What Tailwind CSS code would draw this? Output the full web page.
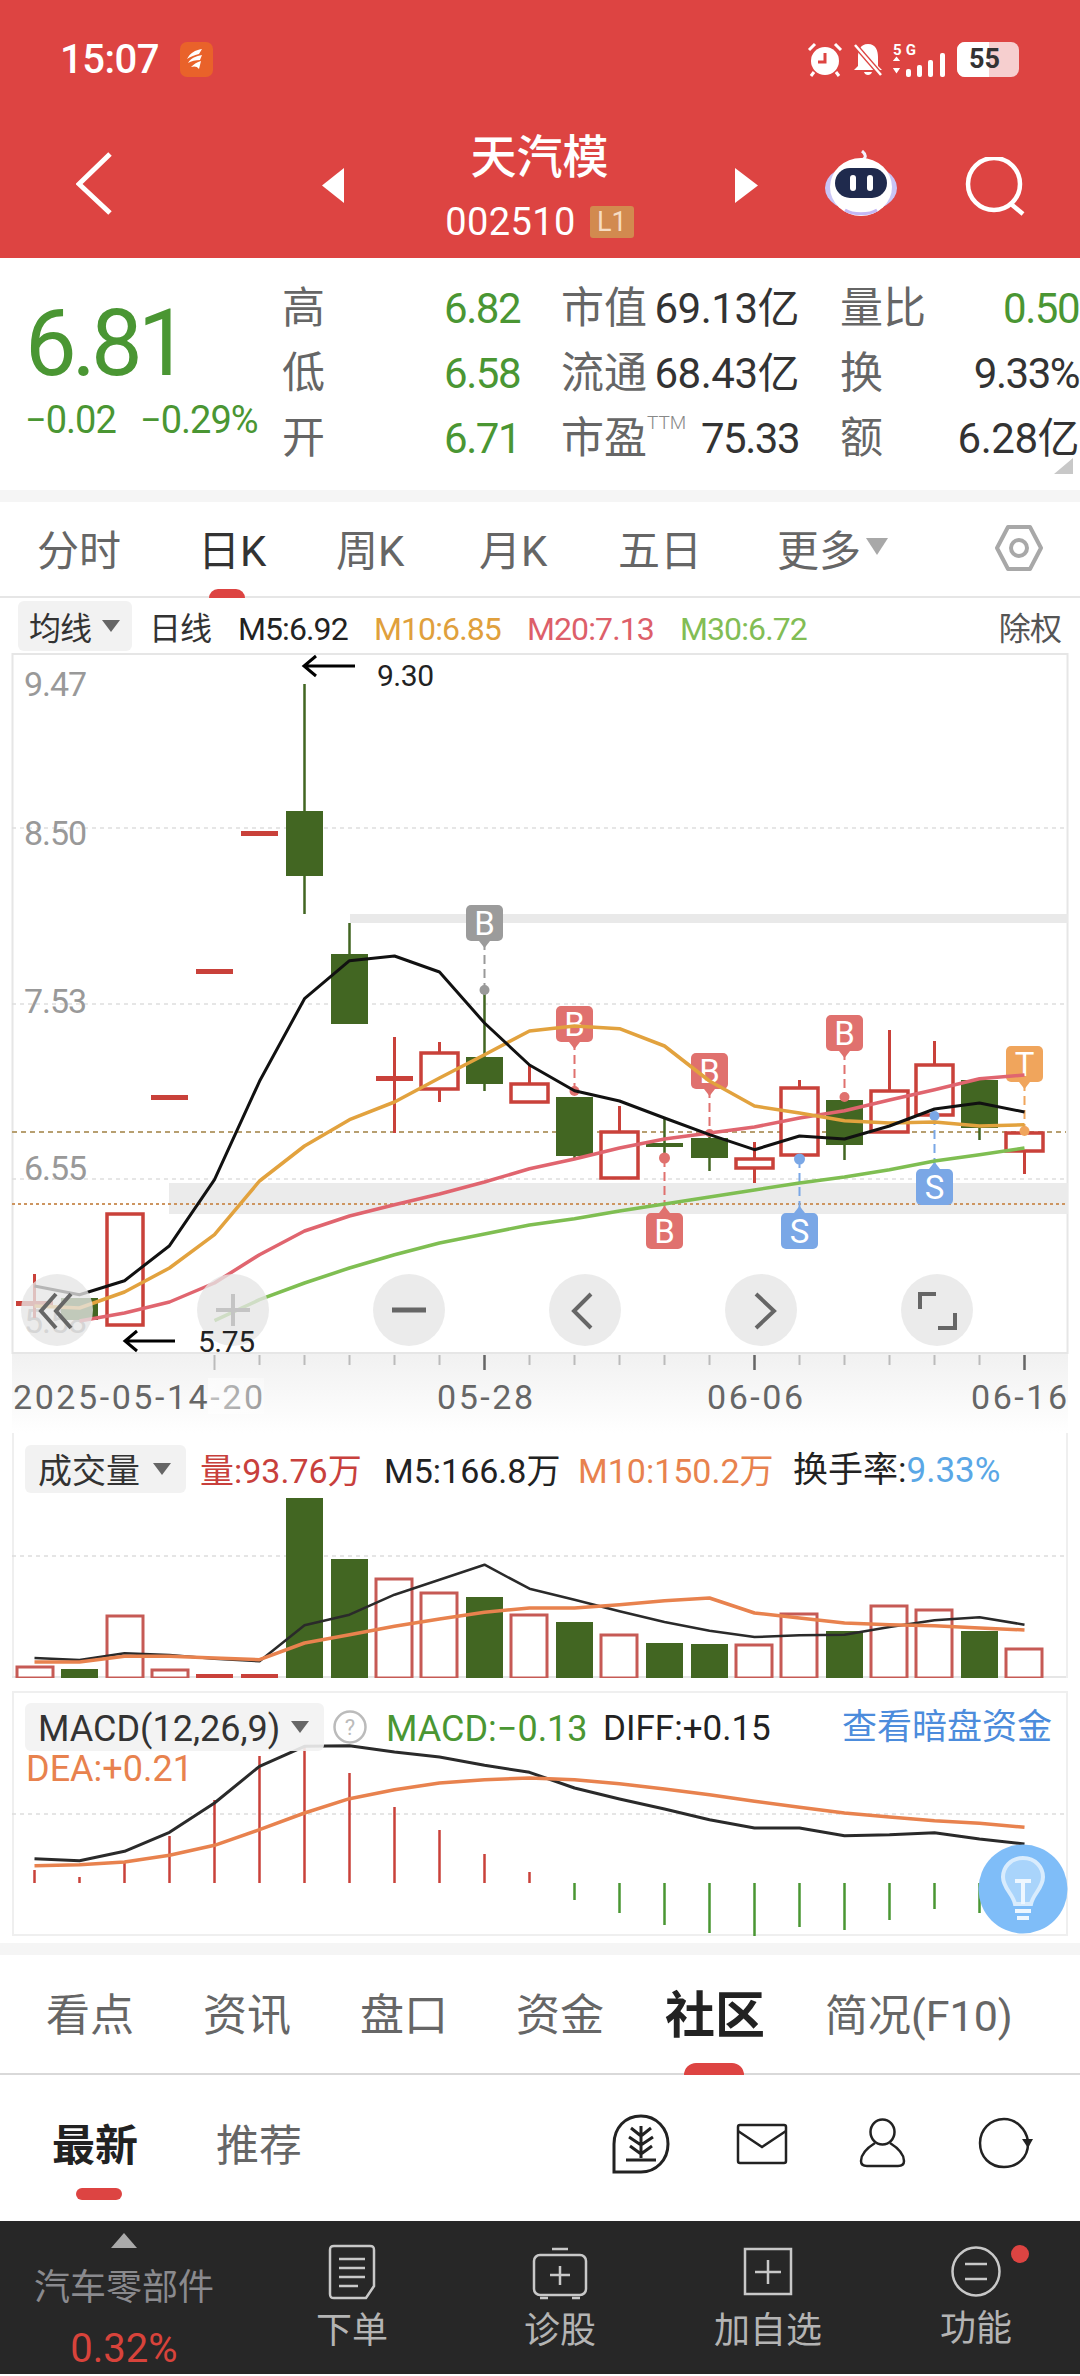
<!DOCTYPE html>
<html lang="zh-CN">
<head>
    <meta charset="UTF-8">
    <meta name="viewport" content="width=device-width, initial-scale=1.0">
    <title>天汽模</title>
    <script src="https://cdn.jsdelivr.net/npm/@tailwindcss/browser@4"></script>
</head>
<body class="bg-white">
<div class="w-[1080px] h-[2376px] overflow-hidden flex flex-col font-['Roboto','Noto_Sans_CJK_SC',sans-serif]">

    <!-- 顶栏 -->
    <header class="h-[258px] bg-[#dd4442] text-white shrink-0 pt-[42px]">
        <div class="h-[35px] flex items-center pl-[60px]">
            <span class="text-[40px] font-medium leading-[35px] w-[108px] tracking-[-0.5px]">15:07</span>
            <svg class="ml-[12px]" width="33" height="35" viewBox="0 0 33 35"><rect width="33" height="35" rx="7" fill="#e9622a"/><path d="M7 17C10 11 15 8 22 7L19 12C14 13 10 15 7 17ZM8 21C11 16 16 14 22 13L20 18C16 18 11 19 8 21ZM11 25C14 22 17 20 21 19L19 27C17 24 14 24 11 25Z" fill="#fff"/></svg>
            <div class="ml-auto flex items-center mr-[61px]">
                <svg width="36" height="35" viewBox="0 0 36 35"><circle cx="18" cy="19" r="14" fill="#fff"/><path d="M18 11V20H11" stroke="#dd4442" stroke-width="3" fill="none"/><path d="M2 8 8 2M34 8 28 2M7 30 4 34M29 30 32 34" stroke="#fff" stroke-width="3"/></svg>
                <svg class="ml-[9px]" width="32" height="35" viewBox="0 0 32 35"><path d="M16 2C8 2 6 9 6 15V24L2 28H30L26 24V15C26 9 24 2 16 2ZM12 30C13 34 19 34 20 30Z" fill="#fff"/><path d="M3 3 29 33" stroke="#dd4442" stroke-width="5"/><path d="M3 3 29 33" stroke="#fff" stroke-width="2.5"/></svg>
                <svg class="ml-[9px]" width="55" height="35" viewBox="0 0 55 35"><text x="0" y="13" font-size="15" font-weight="700" fill="#fff" textLength="23">5G</text><path d="M5 16 9 21H1ZM5 35 1 29H9Z" fill="#fff" transform="translate(-1 0) scale(.9)"/><rect x="13" y="27" width="5" height="8" rx="2" fill="#fff"/><rect x="24" y="23" width="5" height="12" rx="2" fill="#fff"/><rect x="35" y="18" width="5" height="17" rx="2" fill="#fff"/><rect x="47" y="11" width="5" height="24" rx="2" fill="#fff"/></svg>
                <div class="relative ml-[9px] w-[62px] h-[35px] rounded-[8px] bg-[#f6cfcf] overflow-hidden flex items-center">
                    <div class="absolute inset-y-0 left-0 w-[32px] bg-white"></div>
                    <span class="relative ml-[12px] text-[#333] text-[27px] font-bold leading-none">55</span>
                </div>
            </div>
        </div>
        <div class="h-[101px] mt-[60px] flex items-start pl-[76px]">
            <svg class="mt-[15px]" width="36" height="63" viewBox="0 0 36 63"><path d="M34 2 3 32 34 61" fill="none" stroke="#fff" stroke-width="5"/></svg>
            <svg class="mt-[31px] ml-[210px]" width="22" height="35" viewBox="0 0 22 35"><path d="M22 0V35L0 17.5Z" fill="#fff"/></svg>
            <div class="w-[391px] flex flex-col items-center">
                <div class="text-[46px] leading-[41px] font-medium">天汽模</div>
                <div class="mt-[28px] flex items-center h-[32px]">
                    <span class="text-[38px] leading-[32px] tracking-[0.4px]">002510</span>
                    <span class="ml-[14px] w-[44px] h-[32px] rounded-[3px] bg-[#d28a4f] text-[#f6dcc3] text-[27px] leading-[32px] text-center">L1</span>
                </div>
            </div>
            <svg class="mt-[31px]" width="23" height="35" viewBox="0 0 23 35"><path d="M0 0V35L23 17.5Z" fill="#fff"/></svg>
            <svg class="mt-[13px] ml-[67px]" width="72" height="66" viewBox="0 0 72 66">
                <path d="M36 10C41 9 42 5 37 1" stroke="#f3f1ff" stroke-width="3" fill="none"/>
                <ellipse cx="36" cy="38" rx="36" ry="24" fill="#c9c4f5"/>
                <ellipse cx="36" cy="37" rx="31" ry="29" fill="#fff"/>
                <rect x="10" y="18" width="52" height="30" rx="15" fill="#1f2a4d"/>
                <rect x="25" y="25" width="6" height="16" rx="3" fill="#fff"/>
                <rect x="42" y="25" width="6" height="16" rx="3" fill="#fff"/>
                <path d="M20 60C28 65 44 65 52 60" stroke="#c4b8f5" stroke-width="3" fill="none"/>
            </svg>
            <svg class="mt-[20px] ml-[68px]" width="62" height="60" viewBox="0 0 62 60"><ellipse cx="29" cy="27" rx="26" ry="26" fill="none" stroke="#fff" stroke-width="4.5"/><path d="M46 47 58 57" stroke="#fff" stroke-width="4.5"/></svg>
        </div>
    </header>

    <!-- 行情 -->
    <section class="relative h-[232px] shrink-0 flex pl-[25px]">
        <div class="w-[257px] flex flex-col text-[#4a9633]">
            <div class="text-[92px] leading-[92px] mt-[40px] tracking-[-5px]">6.81</div>
            <div class="flex text-[38px] leading-[40px] mt-[10px] tracking-[-1px]">
                <span class="w-[115px]">−0.02</span>
                <span>−0.29%</span>
            </div>
        </div>
        <div class="mt-[18px] grid grid-cols-[238px_238px_239px] auto-rows-[65px] gap-x-[41px] text-[43px] text-[#666] items-center whitespace-nowrap">
            <div class="flex justify-between items-center"><span>高</span><span class="text-[42px] text-[#4a9633] tracking-[-1.5px]">6.82</span></div>
            <div class="flex justify-between items-center"><span>市值</span><span class="text-[42px] text-[#333] tracking-[-0.5px]">69.13亿</span></div>
            <div class="flex justify-between items-center"><span>量比</span><span class="text-[42px] text-[#4a9633] tracking-[-1.5px]">0.50</span></div>
            <div class="flex justify-between items-center"><span>低</span><span class="text-[42px] text-[#4a9633] tracking-[-1.5px]">6.58</span></div>
            <div class="flex justify-between items-center"><span>流通</span><span class="text-[42px] text-[#333] tracking-[-0.5px]">68.43亿</span></div>
            <div class="flex justify-between items-center"><span>换</span><span class="text-[42px] text-[#333] tracking-[-1.5px]">9.33%</span></div>
            <div class="flex justify-between items-center"><span>开</span><span class="text-[42px] text-[#4a9633] tracking-[-1.5px]">6.71</span></div>
            <div class="flex justify-between items-center"><span class="flex items-start">市盈<span class="text-[19px] leading-[34px] text-[#888] font-light">TTM</span></span><span class="text-[42px] text-[#333] tracking-[-1.5px]">75.33</span></div>
            <div class="flex justify-between items-center"><span>额</span><span class="text-[42px] text-[#333] tracking-[-0.5px]">6.28亿</span></div>
        </div>
        <svg class="absolute right-[7px] bottom-[16px]" width="19" height="16" viewBox="0 0 19 16"><path d="M19 0V16H0Z" fill="#c8c8c8"/></svg>
    </section>
    <div class="h-[12px] bg-[#f5f5f5] shrink-0"></div>

    <!-- 周期 -->
    <nav class="relative h-[96px] shrink-0 border-b-2 border-[#e6e6e6] flex items-center pl-[37px] text-[42px] leading-[48px] text-[#666] pt-[6px] whitespace-nowrap">
        <span class="w-[81px]">分时</span>
        <span class="relative ml-[80px] w-[64px] text-[#333]">日K<span class="absolute left-[11px] top-[61px] w-[36px] h-[9px] rounded-t-full bg-[#dd4442]"></span></span>
        <span class="ml-[74px] w-[67px]">周K</span>
        <span class="ml-[76px] w-[65px]">月K</span>
        <span class="ml-[74px] w-[76px]">五日</span>
        <span class="ml-[83px] w-[80px]">更多</span>
        <svg class="ml-[9px] -mt-[12px]" width="22" height="17" viewBox="0 0 22 17"><path d="M0 0H22L11 17Z" fill="#a8a8a8"/></svg>
        <svg class="ml-[107px] -mt-[8px]" width="48" height="46" viewBox="0 0 48 46"><path d="M13 2H35L46 23 35 44H13L2 23Z" fill="none" stroke="#a8a8a8" stroke-width="4" stroke-linejoin="round"/><ellipse cx="24" cy="23" rx="8" ry="8" fill="none" stroke="#a8a8a8" stroke-width="4"/></svg>
    </nav>

    <!-- 均线 -->
    <div class="h-[55px] shrink-0 flex items-center pl-[18px] pr-[19px] text-[32px] tracking-[-0.9px] whitespace-nowrap">
        <div class="w-[114px] h-[50px] rounded-[6px] bg-[#f2f2f2] flex items-center pl-[11px] text-[#333]"><span class="w-[63px] pt-[6px]">均线</span><svg class="ml-[10px]" width="18" height="12" viewBox="0 0 18 12"><path d="M0 0H18L9 12Z" fill="#666"/></svg></div>
        <span class="ml-[17px] w-[61px] pt-[6px] text-[#333]">日线</span>
        <span class="ml-[28px] w-[110px] pt-[6px] text-[#222]">M5:6.92</span>
        <span class="ml-[26px] w-[127px] pt-[6px] text-[#e0a03c]">M10:6.85</span>
        <span class="ml-[26px] w-[127px] pt-[6px] text-[#dd5f6a]">M20:7.13</span>
        <span class="ml-[26px] w-[127px] pt-[6px] text-[#82bd55]">M30:6.72</span>
        <span class="ml-auto pt-[6px] text-[#555]">除权</span>
    </div>

    <!-- K线 -->
    <svg class="block shrink-0" width="1080" height="780" viewBox="0 655 1080 780" font-family="Roboto,'Noto Sans CJK SC',sans-serif">
        <defs>
            <linearGradient id="axisFade" x1="0" y1="0" x2="0" y2="1"><stop offset="0" stop-color="#f1f1f1"/><stop offset="1" stop-color="#ffffff"/></linearGradient>
            <linearGradient id="labelFade" x1="0" y1="0" x2="1" y2="0"><stop offset="0" stop-color="#ffffff" stop-opacity=".6"/><stop offset="1" stop-color="#ffffff" stop-opacity=".35"/></linearGradient>
        </defs>
        <rect x="12" y="1356" width="1056" height="79" fill="url(#axisFade)"/>
        <rect x="12.5" y="656" width="1055" height="699" fill="none" stroke="#e6e6e6" stroke-width="2"/>
        <path d="M12 830H1066M12 1006H1066M12 1181H1066" stroke="#dedede" stroke-width="1.5" stroke-dasharray="4 4"/>
        <rect x="350" y="916" width="718" height="9" fill="#e9e9e9"/>
        <rect x="169" y="1185" width="899" height="31" fill="#ebebeb"/>
        <path d="M12 1134H1066" stroke="#b79f70" stroke-width="2" stroke-dasharray="5 4"/>
        <path d="M12 1206H1066" stroke="#cd9560" stroke-width="2" stroke-dasharray="3 3"/>

        <g fill="#999" font-size="34">
            <text x="24" y="698" textLength="63">9.47</text>
            <text x="24" y="847" textLength="63">8.50</text>
            <text x="24" y="1015" textLength="63">7.53</text>
            <text x="24" y="1182" textLength="63">6.55</text>
            <text x="24" y="1335" textLength="63">5.58</text>
        </g>

        <!-- 阳线 -->
        <g stroke="#c9413a" stroke-width="3" fill="none">
            <path d="M34.5 1276V1320M394.5 1039V1135M439.5 1044V1054M439.5 1091V1104M529.5 1067V1086M619.5 1108V1134M754.5 1144V1161M754.5 1170V1185M799.5 1082V1090M889.5 1032V1093M934.5 1043V1067M1024.5 1153V1176"/>
        </g>
        <g fill="#c9413a">
            <rect x="16" y="1303" width="37" height="5"/>
            <rect x="151" y="1097" width="37" height="5"/>
            <rect x="196" y="971" width="37" height="5"/>
            <rect x="241" y="833" width="37" height="5"/>
            <rect x="376" y="1078" width="37" height="5"/>
        </g>
        <g stroke="#c9413a" stroke-width="3.5" fill="#fff">
            <rect x="107" y="1216" width="36" height="111"/>
            <rect x="421" y="1055" width="37" height="36"/>
            <rect x="511" y="1086" width="37" height="18"/>
            <rect x="601" y="1134" width="37" height="46"/>
            <rect x="736" y="1161" width="37" height="9"/>
            <rect x="781" y="1090" width="37" height="67"/>
            <rect x="871" y="1093" width="37" height="41"/>
            <rect x="916" y="1067" width="37" height="50"/>
            <rect x="1006" y="1135" width="37" height="18"/>
        </g>
        <!-- 阴线 -->
        <g stroke="#426622" stroke-width="2.5">
            <path d="M304.5 686V916M349.5 925V956M484.5 993V1093M574.5 1157V1160M664.5 1120V1160M709.5 1135V1173M844.5 1146V1162M979.5 1130V1142"/>
        </g>
        <g fill="#426622">
            <rect x="61" y="1300" width="37" height="22"/>
            <rect x="286" y="813" width="37" height="65"/>
            <rect x="331" y="956" width="37" height="70"/>
            <rect x="466" y="1059" width="37" height="27"/>
            <rect x="556" y="1099" width="37" height="59"/>
            <rect x="646" y="1145" width="37" height="4"/>
            <rect x="691" y="1140" width="37" height="20"/>
            <rect x="826" y="1102" width="37" height="45"/>
            <rect x="961" y="1082" width="37" height="48"/>
        </g>

        <!-- 买卖点 -->
        <g stroke-width="2" stroke-dasharray="9 5" fill="none">
            <path d="M484.5 943V992" stroke="#999"/>
            <path d="M574.5 1043V1093" stroke="#e0716e"/>
            <path d="M664.5 1160V1215" stroke="#e0716e"/>
            <path d="M709.5 1091V1135" stroke="#e0716e"/>
            <path d="M844.5 1053V1099" stroke="#e0716e"/>
            <path d="M799.5 1161V1215" stroke="#7aa7e6"/>
            <path d="M934.5 1118V1171" stroke="#7aa7e6"/>
            <path d="M1024.5 1084V1133" stroke="#f0a55c"/>
        </g>
        <g>
            <circle cx="484.5" cy="992" r="5" fill="#999"/>
            <circle cx="574.5" cy="1093" r="5" fill="#e0716e"/>
            <circle cx="664.5" cy="1160" r="5.5" fill="#e0716e"/>
            <circle cx="709.5" cy="1135" r="4" fill="#e0716e"/>
            <circle cx="844.5" cy="1099" r="5" fill="#e0716e"/>
            <circle cx="799.5" cy="1161" r="5.5" fill="#7aa7e6"/>
            <circle cx="934.5" cy="1118" r="5" fill="#7aa7e6"/>
            <circle cx="1024.5" cy="1133" r="5" fill="#f0a55c"/>
        </g>
        <g font-size="33" text-anchor="middle" fill="#fff">
            <rect x="466" y="907" width="37" height="36" rx="5" fill="#9b9b9b"/><path d="M479 943H490L484.5 950Z" fill="#9b9b9b"/><text x="484.5" y="937">B</text>
            <rect x="556" y="1008" width="37" height="36" rx="5" fill="#e0716e"/><path d="M569 1044H580L574.5 1051Z" fill="#e0716e"/><text x="574.5" y="1038">B</text>
            <rect x="691" y="1055" width="37" height="36" rx="5" fill="#e0716e"/><path d="M704 1091H715L709.5 1098Z" fill="#e0716e"/><text x="709.5" y="1085">B</text>
            <rect x="826" y="1017" width="37" height="36" rx="5" fill="#e0716e"/><path d="M839 1053H850L844.5 1060Z" fill="#e0716e"/><text x="844.5" y="1047">B</text>
            <rect x="646" y="1215" width="37" height="36" rx="5" fill="#e0716e"/><path d="M659 1215H670L664.5 1208Z" fill="#e0716e"/><text x="664.5" y="1245">B</text>
            <rect x="781" y="1215" width="37" height="36" rx="5" fill="#7aa7e6"/><path d="M794 1215H805L799.5 1208Z" fill="#7aa7e6"/><text x="799.5" y="1245">S</text>
            <rect x="916" y="1171" width="37" height="36" rx="5" fill="#7aa7e6"/><path d="M929 1171H940L934.5 1164Z" fill="#7aa7e6"/><text x="934.5" y="1201">S</text>
            <rect x="1006" y="1048" width="37" height="36" rx="5" fill="#f0a55c"/><path d="M1019 1084H1030L1024.5 1091Z" fill="#f0a55c"/><text x="1024.5" y="1078">T</text>
        </g>

        <!-- 均线 -->
        <g fill="none" stroke-width="3" stroke-linejoin="round">
            <polyline stroke="#7fbe52" stroke-width="3.5" points="214.5,1322.7 259.5,1301.7 304.5,1285 349.5,1270 394.5,1256.7 439.5,1245 484.5,1236 529.5,1227 574.5,1220.7 619.5,1213 664.5,1206 709.5,1199 754.5,1192 799.5,1185 844.5,1179 889.5,1171.7 934.5,1163 979.5,1156.7 1024.5,1150"/>
            <polyline stroke="#e0656f" stroke-width="3.5" points="79.5,1323 124.5,1315 169.5,1304 214.5,1285 259.5,1256.7 304.5,1233 349.5,1218 394.5,1206.7 439.5,1196 484.5,1184 529.5,1170.7 574.5,1161 619.5,1150 664.5,1141 709.5,1135 754.5,1129 799.5,1120 844.5,1112.7 889.5,1102 934.5,1091.7 979.5,1080.7 1024.5,1077"/>
            <polyline stroke="#e2a23e" stroke-width="3.5" points="34.5,1308 79.5,1310 124.5,1294 169.5,1270 214.5,1236.7 259.5,1183 304.5,1148 349.5,1121.7 394.5,1104 439.5,1080 484.5,1056.7 529.5,1033 574.5,1028 619.5,1030.7 664.5,1048 709.5,1083 754.5,1108 799.5,1115 844.5,1122.7 889.5,1125 934.5,1124 979.5,1128 1024.5,1126.7"/>
            <polyline stroke="#111" points="34.5,1288 79.5,1296.7 124.5,1282.7 169.5,1247.7 214.5,1181.7 259.5,1083.3 304.5,1000.7 349.5,962.7 394.5,958 439.5,974 484.5,1025 529.5,1067 574.5,1092.7 619.5,1103 664.5,1120 709.5,1136.7 754.5,1151.7 799.5,1138 844.5,1141 889.5,1128 934.5,1111 979.5,1105 1024.5,1114"/>
        </g>

        <!-- 缩放按钮 -->
        <g fill="#e6e6e6" fill-opacity=".78">
            <circle cx="57" cy="1312" r="36"/><circle cx="233" cy="1312" r="36"/><circle cx="409" cy="1312" r="36"/><circle cx="585" cy="1312" r="36"/><circle cx="761" cy="1312" r="36"/><circle cx="937" cy="1312" r="36"/>
        </g>
        <g fill="none" stroke="#666" stroke-width="4">
            <path d="M56 1296 41 1313 56 1330M71 1296 56 1313 71 1330"/>
            <path d="M233 1296V1328M216 1312H250" stroke="#c4c4c4"/>
            <path d="M392 1312H426" stroke-width="5"/>
            <path d="M591 1296 574 1313 591 1330"/>
            <path d="M756 1296 774 1313 756 1330"/>
            <path d="M936 1296H920V1311M955 1315V1330H938"/>
        </g>

        <!-- 最高最低 -->
        <g fill="none" stroke="#000" stroke-width="3">
            <path d="M304 668H355M316 658 304 668 316 678"/>
            <path d="M125 1343H175M137 1333 125 1343 137 1353"/>
        </g>
        <text x="377" y="688" font-size="30" fill="#222" textLength="57">9.30</text>
        <text x="198" y="1354" font-size="30" fill="#222" textLength="57">5.75</text>

        <!-- 时间轴 -->
        <path d="M214.5 1357V1372M259.5 1357V1367M304.5 1357V1367M349.5 1357V1367M394.5 1357V1367M439.5 1357V1367M529.5 1357V1367M574.5 1357V1367M619.5 1357V1367M664.5 1357V1367M709.5 1357V1367M799.5 1357V1367M844.5 1357V1367M889.5 1357V1367M934.5 1357V1367M979.5 1357V1367" stroke="#bbb" stroke-width="2"/>
        <path d="M484.5 1357V1372M754.5 1357V1372M1024.5 1357V1372" stroke="#666" stroke-width="2.5"/>
        <g font-size="34" fill="#666">
            <text x="13" y="1411" textLength="250">2025-05-14-20</text>
            <text x="437" y="1411" textLength="96">05-28</text>
            <text x="707" y="1411" textLength="96">06-06</text>
            <text x="971" y="1411" textLength="96">06-16</text>
        </g>
        <rect x="208" y="1380" width="56" height="36" fill="url(#labelFade)"/>
    </svg>

    <!-- 成交量 -->
    <div class="relative h-[245px] mx-[12px] shrink-0 border-x-2 border-[#efefef]">
        <svg class="absolute -left-[14px] top-0" width="1080" height="245" viewBox="0 1435 1080 245">
            <path d="M12 1558H1066" stroke="#ddd" stroke-width="1.5" stroke-dasharray="4 4"/>
            <path d="M12 1679H1066" stroke="#e6e6e6" stroke-width="2"/>
            <g fill="#426622">
                <rect x="61" y="1671" width="37" height="9"/>
                <rect x="286" y="1500" width="37" height="180"/>
                <rect x="331" y="1561" width="37" height="119"/>
                <rect x="466" y="1599" width="37" height="81"/>
                <rect x="556" y="1624" width="37" height="56"/>
                <rect x="646" y="1645" width="37" height="35"/>
                <rect x="691" y="1646" width="37" height="34"/>
                <rect x="826" y="1633" width="37" height="47"/>
                <rect x="961" y="1633" width="37" height="47"/>
            </g>
            <g fill="#c9413a">
                <rect x="196" y="1676" width="37" height="4"/>
                <rect x="241" y="1676" width="37" height="4"/>
            </g>
            <g fill="#fff" stroke="#c65a55" stroke-width="3">
                <rect x="17" y="1669" width="36" height="11"/>
                <rect x="107" y="1618" width="36" height="62"/>
                <rect x="152" y="1672" width="36" height="8"/>
                <rect x="376" y="1581" width="36" height="99"/>
                <rect x="421" y="1595" width="36" height="85"/>
                <rect x="511" y="1617" width="36" height="63"/>
                <rect x="601" y="1637" width="36" height="43"/>
                <rect x="736" y="1647" width="36" height="33"/>
                <rect x="781" y="1616" width="36" height="64"/>
                <rect x="871" y="1608" width="36" height="72"/>
                <rect x="916" y="1612" width="36" height="68"/>
                <rect x="1006" y="1651" width="36" height="29"/>
            </g>
            <g fill="none" stroke-width="3" stroke-linejoin="round">
                <polyline stroke="#2a2a2a" stroke-width="2.5" points="34.5,1660 79.5,1662 124.5,1655.3 169.5,1657 214.5,1660.7 259.5,1663.3 304.5,1627.3 349.5,1616.7 394.5,1596.7 439.5,1581.7 484.5,1566.7 529.5,1590.7 574.5,1601.7 619.5,1613.3 664.5,1624 709.5,1632.7 754.5,1639 799.5,1637.3 844.5,1636.7 889.5,1629 934.5,1622.3 979.5,1619.3 1024.5,1626.7"/>
                <polyline stroke="#e8824e" stroke-width="3.5" points="34.5,1664 79.5,1664 124.5,1658.3 169.5,1658.3 214.5,1660 259.5,1661.7 304.5,1645 349.5,1636.7 394.5,1628.3 439.5,1621 484.5,1614.3 529.5,1610 574.5,1610 619.5,1606.7 664.5,1602.7 709.5,1600 754.5,1615 799.5,1620 844.5,1625 889.5,1626.7 934.5,1627.7 979.5,1630 1024.5,1632"/>
            </g>
        </svg>
        <div class="relative flex items-center h-[48px] mt-[12px] ml-[11px] text-[34px] whitespace-nowrap">
            <div class="w-[161px] h-[48px] rounded-[6px] bg-[#f2f2f2] flex items-center pl-[13px] text-[#333]"><span class="w-[103px] text-[34px] pt-[4px]">成交量</span><svg class="ml-[12px]" width="18" height="12" viewBox="0 0 18 12"><path d="M0 0H18L9 12Z" fill="#666"/></svg></div>
            <span class="ml-[14px] w-[160px] pt-[4px] text-[#c8403c]">量:93.76万</span>
            <span class="ml-[24px] w-[170px] pt-[4px] text-[#222]">M5:166.8万</span>
            <span class="ml-[24px] w-[193px] pt-[4px] text-[#e8824e]">M10:150.2万</span>
            <span class="ml-[22px] pt-[4px] text-[35px] text-[#222]">换手率:<span class="text-[#5aa7e6]">9.33%</span></span>
        </div>
    </div>
    <div class="h-[13px] shrink-0"></div>

    <!-- MACD -->
    <div class="relative h-[245px] mx-[12px] shrink-0 border-x-2 border-t-2 border-b-2 border-[#efefef]">
        <svg class="absolute -left-[14px] -top-[2px]" width="1080" height="245" viewBox="0 1693 1080 245">
            <path d="M12 1816H1066" stroke="#ddd" stroke-width="1.5" stroke-dasharray="4 4"/>
            <path d="M34.5 1885V1872M79.5 1885V1879M124.5 1885V1865M169.5 1885V1838M214.5 1885V1802M259.5 1885V1758M304.5 1885V1748M349.5 1885V1775M394.5 1885V1809M439.5 1885V1832M484.5 1885V1856M529.5 1885V1874" stroke="#c9413a" stroke-width="2.5"/>
            <path d="M574.5 1885V1902M619.5 1885V1915M664.5 1885V1927M709.5 1885V1935M754.5 1885V1938M799.5 1885V1929M844.5 1885V1932M889.5 1885V1922M934.5 1885V1911M979.5 1885V1915" stroke="#4a9633" stroke-width="2.5"/>
            <g fill="none" stroke-linejoin="round">
                <polyline stroke="#2a2a2a" stroke-width="3" points="34.5,1860.7 79.5,1862.7 124.5,1853.3 169.5,1834.3 214.5,1805 259.5,1768.3 304.5,1748.3 349.5,1747.7 394.5,1754 439.5,1759 484.5,1767.3 529.5,1774.3 574.5,1790 619.5,1801 664.5,1811 709.5,1821.7 754.5,1830 799.5,1830 844.5,1837.7 889.5,1836.7 934.5,1834.7 979.5,1841 1024.5,1846"/>
                <polyline stroke="#e8824e" stroke-width="3.5" points="34.5,1867.7 79.5,1866.7 124.5,1864 169.5,1857.3 214.5,1847.3 259.5,1831.7 304.5,1815 349.5,1800.7 394.5,1791.7 439.5,1785 484.5,1781.7 529.5,1780 574.5,1781.7 619.5,1785.7 664.5,1791 709.5,1796.7 754.5,1803.3 799.5,1809.3 844.5,1815 889.5,1819 934.5,1822.7 979.5,1825.3 1024.5,1829.3"/>
            </g>
        </svg>
        <div class="relative flex items-center h-[48px] mt-[10px] ml-[11px] text-[36px] whitespace-nowrap">
            <div class="w-[299px] h-[48px] rounded-[6px] bg-[#f2f2f2]/90 flex items-center pl-[13px] text-[#333]"><span class="w-[241px] pt-[4px]">MACD(12,26,9)</span><svg class="ml-[12px]" width="18" height="12" viewBox="0 0 18 12"><path d="M0 0H18L9 12Z" fill="#666"/></svg></div>
            <svg class="ml-[9px]" width="34" height="34" viewBox="0 0 34 34"><circle cx="17" cy="17" r="15.5" fill="#fff" stroke="#bbb" stroke-width="2.5"/><text x="17" y="25" font-size="22" text-anchor="middle" fill="#bbb">?</text></svg>
            <span class="ml-[19px] w-[201px] pt-[4px] text-[#4a9633]">MACD:−0.13</span>
            <span class="ml-[16px] w-[167px] pt-[4px] text-[35px] text-[#222]">DIFF:+0.15</span>
            <span class="ml-[72px] pt-[2px] text-[35px] text-[#4c8cdc]">查看暗盘资金</span>
        </div>
        <div class="relative ml-[12px] mt-[-1px] text-[36px] leading-[38px] text-[#e8824e]">DEA:+0.21</div>
        <svg class="absolute -right-[2px] bottom-0" width="90" height="90" viewBox="0 0 90 90"><circle cx="45" cy="45" r="44.5" fill="#7fbdf8"/><path d="M45 14C32 14 25 24 25 33 25 44 35 50 37 60H53C55 50 65 44 65 33 65 24 58 14 45 14Z" fill="#a9d4fb" stroke="#d9ecfd" stroke-width="4"/><path d="M37 37H53M45 37V60M37 67H53M39 74H51" stroke="#eef7ff" stroke-width="4" fill="none"/></svg>
    </div>
    <div class="h-[7px] shrink-0"></div>
    <div class="h-[12px] bg-[#f5f5f5] shrink-0"></div>

    <!-- 资讯 -->
    <nav class="relative h-[120px] shrink-0 border-b-2 border-[#d9d9d9] flex items-center pl-[46px] pt-[4px] text-[44px] leading-[56px] text-[#666] whitespace-nowrap">
        <span class="w-[86px]">看点</span>
        <span class="ml-[71px] w-[86px]">资讯</span>
        <span class="ml-[71px] w-[85px]">盘口</span>
        <span class="ml-[71px] w-[85px]">资金</span>
        <span class="relative ml-[64px] w-[96px] text-[50px] font-bold text-[#222]">社区<span class="absolute left-[19px] top-[75px] w-[60px] h-[12px] rounded-t-full bg-[#dd4442]"></span></span>
        <span class="ml-[64px] text-[43px]">简况(F10)</span>
    </nav>

    <!-- 社区 -->
    <div class="h-[146px] shrink-0 flex items-start pl-[52px]">
        <div class="relative mt-[46px] text-[43px] leading-[50px] font-bold text-[#222] w-[86px]">最新<span class="absolute left-[24px] top-[67px] w-[46px] h-[12px] rounded-full bg-[#dd4442]"></span></div>
        <div class="mt-[46px] ml-[78px] text-[43px] leading-[50px] text-[#666]">推荐</div>
        <div class="ml-auto flex items-start">
            <svg class="mt-[39px]" width="58" height="60" viewBox="0 0 58 60" fill="none" stroke="#222" stroke-width="3"><path d="M2 58V30C2 14 13 2 29 2 44 2 56 14 56 30 56 46 44 58 29 58Z"/><path d="M29 12V44M29 22 19 14M29 22 39 14M29 31 17 23M29 31 41 23M29 40 18 32M29 40 40 32M14 46H44"/></svg>
            <svg class="mt-[48px] ml-[66px]" width="52" height="42" viewBox="0 0 52 42" fill="none" stroke="#222" stroke-width="2.5"><rect x="2" y="2" width="48" height="38" rx="2"/><path d="M2 8 26 24 50 8"/></svg>
            <svg class="mt-[43px] ml-[71px]" width="47" height="50" viewBox="0 0 47 50" fill="none" stroke="#222" stroke-width="2.5"><ellipse cx="23.5" cy="14" rx="12" ry="12.5"/><path d="M16 25C8 30 2 37 2 43 2 47 5 48 8 48H39C42 48 45 47 45 43 45 37 39 30 31 25"/></svg>
            <svg class="mt-[42px] ml-[72px] mr-[47px]" width="55" height="52" viewBox="0 0 55 52" fill="none" stroke="#222" stroke-width="2.5"><path d="M26 2C12 2 2 13 2 26 2 40 12 50 26 50 40 50 50 40 50 27"/><path d="M26 2C38 2 48 12 50 24"/><path d="M44 22H55L50 31Z" fill="#222" stroke="none"/></svg>
        </div>
    </div>

    <!-- 底栏 -->
    <footer class="h-[153px] shrink-0 bg-[#272727] flex text-[#b4b4b4] text-[36px]">
        <div class="w-[248px] flex flex-col items-center">
            <svg class="mt-[12px]" width="26" height="15" viewBox="0 0 26 15"><path d="M13 0 26 15H0Z" fill="#aaa"/></svg>
            <span class="mt-[20px] text-[36px] leading-[40px] text-[#8a8a8e]">汽车零部件</span>
            <span class="mt-[21px] text-[40px] leading-[40px] text-[#d8433b]">0.32%</span>
        </div>
        <div class="w-[208px] flex flex-col items-center">
            <svg class="mt-[23px]" width="48" height="56" viewBox="0 0 48 56" fill="none" stroke="#c8c8c8" stroke-width="2.5"><path d="M6 2H42C45 2 46 3 46 6V42L38 54H6C3 54 2 53 2 50V6C2 3 3 2 6 2Z"/><path d="M11 15H37M11 24H37M11 33H37M11 42H30"/></svg>
            <span class="mt-[11px] leading-[40px]">下单</span>
        </div>
        <div class="w-[208px] flex flex-col items-center">
            <svg class="mt-[26px]" width="56" height="53" viewBox="0 0 56 53" fill="none" stroke="#c8c8c8" stroke-width="2.5"><path d="M20 2H36"/><rect x="2" y="8" width="52" height="40" rx="6"/><path d="M28 19V38M18 28H38M8 51H16M40 51H48"/></svg>
            <span class="mt-[11px] leading-[40px]">诊股</span>
        </div>
        <div class="w-[208px] flex flex-col items-center">
            <svg class="mt-[26px]" width="50" height="49" viewBox="0 0 50 49" fill="none" stroke="#c8c8c8" stroke-width="2.5"><rect x="2" y="2" width="46" height="45"/><path d="M25 13V37M12 25H38"/></svg>
            <span class="mt-[15px] leading-[40px]">加自选</span>
        </div>
        <div class="relative w-[208px] flex flex-col items-center">
            <svg class="mt-[25px]" width="50" height="51" viewBox="0 0 50 51" fill="none" stroke="#c8c8c8" stroke-width="2.5"><ellipse cx="25" cy="25.5" rx="23.5" ry="24"/><path d="M14 18H36M14 33H36"/></svg>
            <span class="mt-[12px] leading-[40px]">功能</span>
            <span class="absolute left-[139px] top-[24px] w-[18px] h-[18px] rounded-full bg-[#dd4442]"></span>
        </div>
    </footer>
</div>
</body>
</html>
